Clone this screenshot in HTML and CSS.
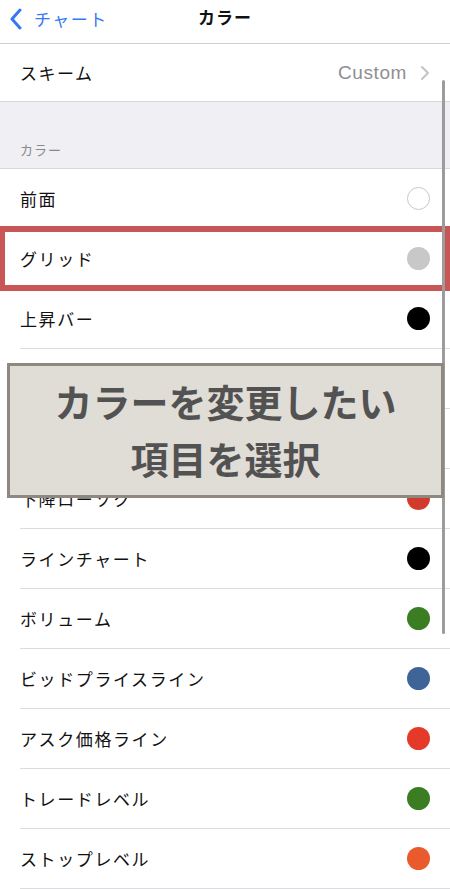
FILE: index.html
```html
<!DOCTYPE html>
<html lang="ja">
<head>
    <meta charset="UTF-8">
    <meta name="viewport" content="width=device-width, initial-scale=1.0">
    <title>カラー</title>
    <link rel="stylesheet" href="styles.css">
</head>
<body>
    <div class="nav">
        <a class="back" href="#">
            <svg class="back-icon" viewBox="0 0 14 22" width="14" height="22">
                <path d="M11 2 L3 11 L11 20" fill="none" stroke="#3478f6" stroke-width="3" stroke-linecap="round" stroke-linejoin="round"/>
            </svg>
            <span>チャート</span>
        </a>
        <div class="nav-title">カラー</div>
    </div>

    <div class="scheme">
        <span class="label">スキーム</span>
        <span class="value">Custom</span>
        <svg class="chevron" viewBox="0 0 10 16" width="10" height="16">
            <path d="M2 2 L8 8 L2 14" fill="none" stroke="#c4c4c7" stroke-width="2" stroke-linecap="round" stroke-linejoin="round"/>
        </svg>
    </div>

    <div class="section-head">カラー</div>

    <ul class="colors">
        <li class="row"><span class="label">前面</span><span class="swatch white"></span></li>
        <li class="row marked"><span class="label">グリッド</span><span class="swatch grey"></span></li>
        <li class="row"><span class="label">上昇バー</span><span class="swatch black"></span></li>
        <!-- these two rows sit under the callout -->
        <li class="row"><span class="label"></span><span class="swatch red"></span></li>
        <li class="row"><span class="label"></span><span class="swatch black"></span></li>
        <li class="row"><span class="label">下降ローソク</span><span class="swatch red"></span></li>
        <li class="row"><span class="label">ラインチャート</span><span class="swatch black"></span></li>
        <li class="row"><span class="label">ボリューム</span><span class="swatch green"></span></li>
        <li class="row"><span class="label">ビッドプライスライン</span><span class="swatch blue"></span></li>
        <li class="row"><span class="label">アスク価格ライン</span><span class="swatch red2"></span></li>
        <li class="row"><span class="label">トレードレベル</span><span class="swatch green"></span></li>
        <li class="row"><span class="label">ストップレベル</span><span class="swatch orange"></span></li>
    </ul>

    <div class="scrollbar"></div>

    <div class="callout">カラーを変更したい<br>項目を選択</div>
</body>
</html>
```

FILE: styles.css
```css
body {
    margin: 0;
    background-color: #fff;
    font-family: "Noto Sans CJK JP", "Noto Sans", sans-serif;
    color: #111;
    position: relative;
    overflow: hidden;
    height: 889px;
}
.nav {
    height: 43px;
    border-bottom: 1px solid #cfcfd2;
    display: flex;
    align-items: center;
    justify-content: center;
    position: relative;
}
.back {
    position: absolute;
    left: 9px;
    top: 6px;
    display: flex;
    align-items: center;
    gap: 11px;
    color: #3478f6;
    text-decoration: none;
    font-size: 17px;
    letter-spacing: 1.5px;
}
.back-icon {
    display: block;
}
.nav-title {
    font-size: 17px;
    font-weight: bold;
    margin-top: -10px;
    letter-spacing: 1px;
}
.scheme {
    height: 57px;
    border-bottom: 1px solid #d8d8dc;
    display: flex;
    align-items: center;
    padding: 0 20px;
    font-size: 17px;
    letter-spacing: 1.5px;
}
.scheme .label {
    flex: 1;
}
.scheme .value {
    color: #8e8e93;
    font-family: "Liberation Sans", Arial, sans-serif;
    font-size: 19px;
    letter-spacing: 0.6px;
    margin-right: 13px;
}
.chevron {
    display: block;
}
.section-head {
    height: 67px;
    box-sizing: border-box;
    background-color: #efeff4;
    border-bottom: 1px solid #d8d8dc;
    color: #8a8a8e;
    font-size: 13px;
    letter-spacing: 1px;
    padding: 38px 20px 0;
}
.colors {
    list-style: none;
    margin: 0;
    padding: 0 0 0 20px;
}
.row {
    height: 59px;
    border-bottom: 1px solid #dcdcdf;
    display: flex;
    align-items: center;
    justify-content: space-between;
    padding-right: 20px;
    font-size: 17px;
    letter-spacing: 1.6px;
    position: relative;
}
.row.marked::after {  /* red annotation frame */
    content: "";
    position: absolute;
    left: -20px;
    right: 0;
    top: -3px;
    bottom: -3px;
    border: 6px solid #c85656;
    border-left-width: 5px;
}
.swatch {
    width: 23px;
    height: 23px;
    border-radius: 50%;
    box-sizing: border-box;
}
.white { background-color: #fff; border: 1px solid #c8c8cc; }
.grey { background-color: #c8c8c8; }
.black { background-color: #000; }
.red { background-color: #d23a2b; }
.red2 { background-color: #e5392a; }
.green { background-color: #3a7d23; }
.blue { background-color: #3f6598; }
.orange { background-color: #e95a2c; }
.scrollbar {
    position: absolute;
    left: 442px;
    top: 80px;
    width: 3px;
    height: 554px;
    border-radius: 2px;
    background-color: #9c9c9c;
}
.callout {
    position: absolute;
    left: 7px;
    top: 363px;
    width: 437px;
    height: 135px;
    box-sizing: border-box;
    border: 3px solid #8f8880;
    background-color: #e0dcd6;
    color: #525252;
    font-size: 38px;
    font-weight: bold;
    line-height: 57px;
    text-align: center;
    padding-top: 6px;
}
```
